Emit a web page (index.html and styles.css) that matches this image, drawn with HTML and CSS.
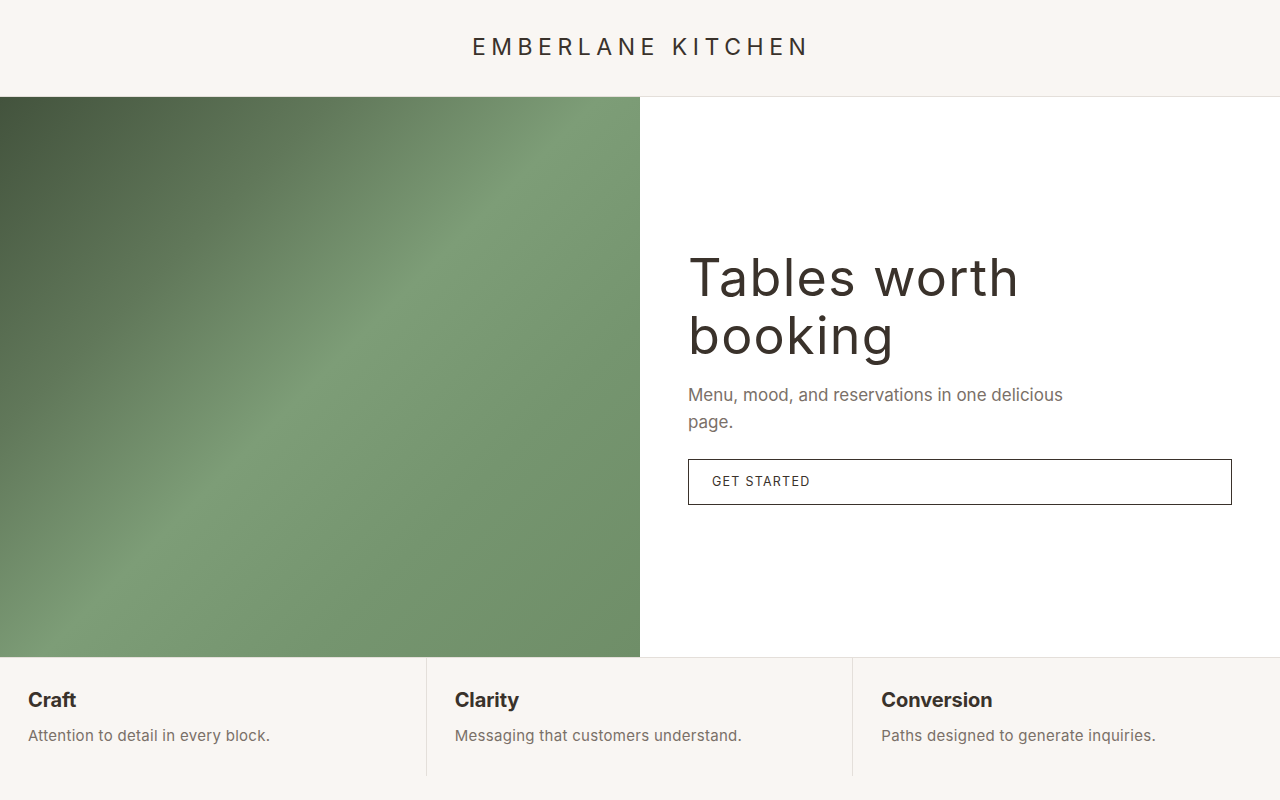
FILE: index.html
```html
<!DOCTYPE html>
<html lang="en">
<head>
<meta charset="utf-8">
<title>Emberlane Kitchen</title>
<link rel="stylesheet" href="styles.css">
</head>
<body>
<header class="site-header">
  <h1 class="brand">EMBERLANE KITCHEN</h1>
</header>
<section class="hero">
  <div class="hero-media"></div>
  <div class="hero-copy">
    <h2 class="hero-title">Tables worth booking</h2>
    <p class="hero-text">Menu, mood, and reservations in one delicious page.</p>
    <a class="btn" href="#">GET STARTED</a>
  </div>
</section>
<section class="features">
  <div class="feature">
    <h3>Craft</h3>
    <p>Attention to detail in every block.</p>
  </div>
  <div class="feature">
    <h3>Clarity</h3>
    <p>Messaging that customers understand.</p>
  </div>
  <div class="feature">
    <h3>Conversion</h3>
    <p>Paths designed to generate inquiries.</p>
  </div>
</section>
</body>
</html>
```
FILE: styles.css
```css
* { box-sizing: border-box; }
html, body { margin: 0; padding: 0; }
body {
  background: #f9f6f3;
  font-family: Inter, "Noto Sans", sans-serif;
  color: #3a322b;
}
.site-header {
  height: 97px;
  border-bottom: 1px solid #e4dfda;
  display: flex;
  align-items: center;
  justify-content: center;
}
.brand {
  margin: -3px 0 0;
  font-weight: 400;
  font-size: 23px;
  letter-spacing: 0.24em;
  padding-left: 0.14em;
  color: #3a322b;
}
.hero {
  display: grid;
  grid-template-columns: 640px 1fr;
  height: 561px;
  border-bottom: 1px solid #e4dfda;
}
.hero-media {
  background: linear-gradient(135deg, #43533d 0%, #61785a 28%, #7d9d77 50%, #75956f 72%, #6f8e68 100%);
}
.hero-copy {
  background: #ffffff;
  display: flex;
  flex-direction: column;
  justify-content: center;
  padding: 0 48px 1px;
}
.hero-title {
  margin: 0;
  font-weight: 400;
  font-size: 52px;
  line-height: 58px;
  letter-spacing: 0.025em;
  color: #3a322b;
  max-width: 440px;
}
.hero-text {
  margin: 17px 0 0;
  font-size: 17px;
  line-height: 27px;
  color: #7a7068;
  max-width: 390px;
}
.btn {
  display: flex;
  align-items: center;
  margin-top: 23px;
  height: 46px;
  border: 1px solid #3a322b;
  padding: 0 23px;
  font-size: 12.5px;
  letter-spacing: 0.1em;
  color: #3a322b;
  text-decoration: none;
}
.features {
  display: grid;
  grid-template-columns: repeat(3, 1fr);
}
.feature {
  height: 118px;
  padding: 30px 28px 0;
  border-right: 1px solid #e4dfda;
}
.feature:last-child { border-right: none; }
.feature h3 {
  margin: 0;
  font-size: 20px;
  line-height: 24px;
  font-weight: 700;
  letter-spacing: -0.005em;
  color: #3a322b;
}
.feature p {
  margin: 13px 0 0;
  font-size: 15px;
  line-height: 22px;
  letter-spacing: 0.02em;
  color: #7a7068;
}
```
